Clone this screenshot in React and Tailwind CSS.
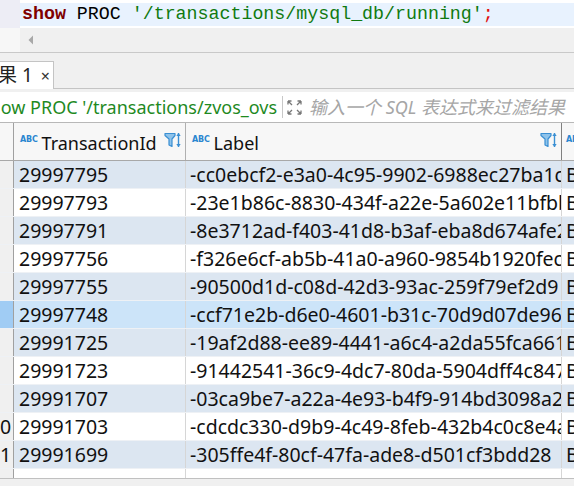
import React from "react";

const rows = [
  ["29997795", "-cc0ebcf2-e3a0-4c95-9902-6988ec27ba1c"],
  ["29997793", "-23e1b86c-8830-434f-a22e-5a602e11bfbb"],
  ["29997791", "-8e3712ad-f403-41d8-b3af-eba8d674afe2"],
  ["29997756", "-f326e6cf-ab5b-41a0-a960-9854b1920fec"],
  ["29997755", "-90500d1d-c08d-42d3-93ac-259f79ef2d9"],
  ["29997748", "-ccf71e2b-d6e0-4601-b31c-70d9d07de96"],
  ["29991725", "-19af2d88-ee89-4441-a6c4-a2da55fca661"],
  ["29991723", "-91442541-36c9-4dc7-80da-5904dff4c847"],
  ["29991707", "-03ca9be7-a22a-4e93-b4f9-914bd3098a2"],
  ["29991703", "-cdcdc330-d9b9-4c49-8feb-432b4c0c8e4a"],
  ["29991699", "-305ffe4f-80cf-47fa-ade8-d501cf3bdd28"],
];

const font = { fontFamily: '"Noto Sans", "Noto Sans CJK SC", sans-serif' };

function FilterSort() {
  return (
    <svg width="18" height="17" viewBox="0 0 18 17">
      <path d="M1 1.5h10v2l-3 3.5v7.5l-3-1.5v-6L1 3.5z" fill="#8fc3ea" stroke="#3a8fd3" strokeWidth="1.2" strokeLinejoin="round" />
      <path d="M14.5 1v14" stroke="#3a8fd3" strokeWidth="1.4" />
      <path d="M12.3 4l2.2-3 2.2 3z" fill="#3a8fd3" />
      <path d="M12.3 12l2.2 3 2.2-3z" fill="#3a8fd3" />
    </svg>
  );
}

function Abc() {
  return (
    <span className="text-[8px] font-bold leading-none tracking-[-0.2px] text-[#2a86d0] self-start mt-[13px] mr-[4px]" style={{ fontFamily: '"DejaVu Sans", sans-serif' }}>
      ABC
    </span>
  );
}

export default function App() {
  return (
    <div className="w-[574px] h-[486px] overflow-hidden bg-[#f0f0f0] flex flex-col" style={font}>
      {/* Editor line */}
      <div className="h-[28px] flex bg-white shrink-0">
        <div className="w-[20px] bg-[#ededf5]" />
        <div className="flex-1 mt-[3px] h-[23px] bg-[#e8f2fe] flex items-center pl-[2px] text-[18.3px] whitespace-nowrap" style={{ fontFamily: '"Liberation Mono", monospace' }}>
          <span className="text-[#7f0000] font-bold">show</span>
          <span className="text-black">&nbsp;PROC&nbsp;</span>
          <span className="text-[#107a10]">'/transactions/mysql_db/running'</span>
          <span className="text-[#e01010]">;</span>
        </div>
      </div>
      {/* horizontal scrollbar */}
      <div className="h-[25px] flex shrink-0 border-b border-[#c9c9c9]">
        <div className="w-[20px] bg-[#f7f7f7]" />
        <div className="flex-1 bg-[#f0f0f0] flex items-center pl-[8px]">
          <svg width="6" height="10" viewBox="0 0 6 10"><path d="M5 0.5L0.5 5 5 9.5z" fill="#a8a8a8" /></svg>
        </div>
      </div>
      {/* tab bar */}
      <div className="h-[36px] shrink-0 flex items-end border-b border-[#c4c4c4]">
        <div className="h-[28px] w-[54px] bg-white border-t border-r border-[#c4c4c4] flex items-center overflow-hidden -mb-px">
          <span className="text-[19px] text-[#222] whitespace-nowrap ml-[-21px]">结果 1</span>
          <span className="text-[16px] text-[#333] ml-[8px]">×</span>
        </div>
      </div>
      {/* filter bar */}
      <div className="h-[34px] shrink-0 bg-white flex items-center border-t-[3px] border-t-[#f0f0f0] border-b border-b-[#b8b8b8]">
        <div className="w-[282px] overflow-hidden whitespace-nowrap text-[18px] text-[#1f8a1f]">
          <span className="ml-[-19px]">show PROC '/transactions/zvos_ovs</span>
        </div>
        <div className="w-px h-[22px] bg-[#c8c8c8]" />
        <svg className="ml-[4px]" width="15" height="15" viewBox="0 0 15 15" fill="none" stroke="#777" strokeWidth="1.3">
          <path d="M1 1l4 4M1 1v3.5M1 1h3.5" />
          <path d="M14 1l-4 4M14 1v3.5M14 1h-3.5" />
          <path d="M1 14l4-4M1 14v-3.5M1 14h3.5" />
          <path d="M14 14l-4-4M14 14v-3.5M14 14h-3.5" />
        </svg>
        <span className="ml-[7px] text-[18px] italic text-[#a6a6a6] whitespace-nowrap">输入一个 SQL 表达式来过滤结果</span>
      </div>
      {/* grid */}
      <div className="flex-1 bg-white flex flex-col">
        {/* header */}
        <div className="h-[38px] shrink-0 flex bg-[#f7f7f7] border-b border-[#a8a8a8]">
          <div className="w-[14px] border-r border-[#a0a0a0]" />
          <div className="w-[172px] border-r border-[#b0b0b0] flex items-start pl-[6px] pr-[3px]">
            <Abc />
            <span className="text-[18px] text-[#111] mt-[7px] leading-[26px]">TransactionId</span>
            <span className="ml-auto mt-[9px]"><FilterSort /></span>
          </div>
          <div className="w-[376px] border-r border-[#808080] flex items-start pl-[6px] pr-[3px]">
            <Abc />
            <span className="text-[18px] text-[#111] mt-[7px] leading-[26px]">Label</span>
            <span className="ml-auto mt-[9px]"><FilterSort /></span>
          </div>
          <div className="flex-1 flex items-start pl-[4px] overflow-hidden">
            <Abc />
          </div>
        </div>
        {rows.map(([id, label], i) => {
          const selected = i === 5;
          const bg = selected ? "bg-[#cce4f9]" : i % 2 === 0 ? "bg-[#dce6f1]" : "bg-white";
          const rn = i === 9 ? "0" : i === 10 ? "1" : "";
          return (
            <div key={id} className={`h-[28px] shrink-0 flex border-b border-[#eef1f5] ${bg}`}>
              <div className={`w-[14px] border-r border-[#a0a0a0] text-[19.5px] text-[#111] leading-[28px] overflow-hidden ${selected ? "bg-[#a0ccf4]" : "bg-[#f0f0f0]"}`}>
                {rn}
              </div>
              <div className="w-[172px] border-r border-[#d6d6d6] pl-[5px] text-[19.5px] text-[#111] leading-[28px] whitespace-nowrap overflow-hidden">
                {id}
              </div>
              <div className="w-[376px] border-r border-[#d6d6d6] pl-[4px] text-[19.5px] text-[#111] leading-[28px] whitespace-nowrap overflow-hidden">
                {label}
              </div>
              <div className="flex-1 pl-[4px] text-[19.5px] text-[#111] leading-[28px] overflow-hidden">B</div>
            </div>
          );
        })}
        <div className="flex-1 flex">
          <div className="w-[14px] border-r border-[#a0a0a0] bg-[#f0f0f0]" />
          <div className="w-[172px] border-r border-[#d6d6d6]" />
          <div className="w-[376px] border-r border-[#d6d6d6]" />
        </div>
        <div className="h-[8px] shrink-0 bg-[#f0f0f0] border-t border-[#c0c0c0]" />
      </div>
    </div>
  );
}
